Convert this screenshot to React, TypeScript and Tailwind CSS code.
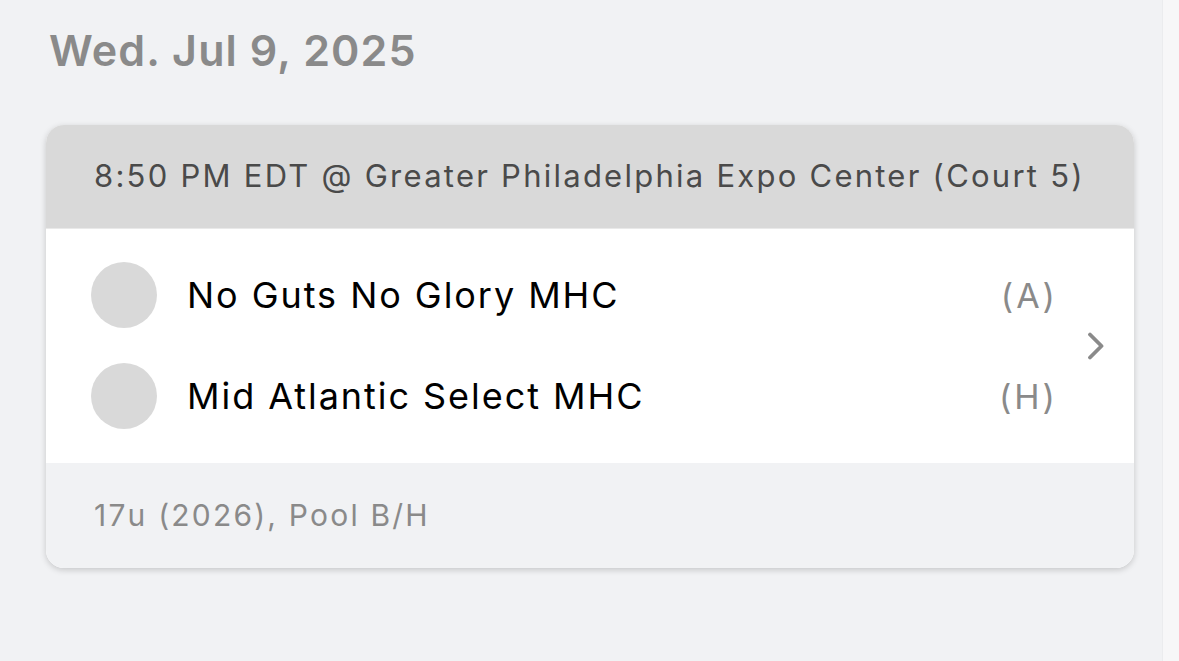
import React from 'react';

const teams = [
  { id: 'a', name: 'No Guts No Glory MHC', side: '(A)' },
  { id: 'h', name: 'Mid Atlantic Select MHC', side: '(H)' },
];

export default function App() {
  return (
    <div className="flex h-[661px] w-[1179px] overflow-hidden bg-[#f1f2f4] font-['Inter',sans-serif]">
      <main className="flex-1 pl-[46px] pr-[28px] pt-[23px]">
        {/* date heading */}
        <h1 className="pl-[3px] text-[43px] font-semibold leading-[54px] tracking-[1.1px] text-[#8a8a8a]">
          Wed. Jul 9, 2025
        </h1>

        {/* game card */}
        <section className="mt-[48px] overflow-hidden rounded-[18px] bg-white shadow-[0_2px_6px_rgba(0,0,0,0.18)]">
          <header className="flex h-[104px] items-center whitespace-nowrap border-b border-[#e9e9e9] bg-[#d9d9d9] pl-[48px] text-[31px] tracking-[2.25px] text-[#4a4a4a]">
            8:50 PM EDT @ Greater Philadelphia Expo Center (Court 5)
          </header>

          <div className="flex items-center pb-[34px] pt-[33px]">
            <div className="flex flex-1 flex-col gap-[35px] pl-[45px]">
              {teams.map(team => (
                <div key={team.id} className="flex h-[66px] items-center">
                  <div className="h-[66px] w-[66px] shrink-0 rounded-full bg-[#d9d9d9]" />
                  <span className="ml-[30px] flex-1 whitespace-nowrap text-[36px] tracking-[1.95px] text-black">{team.name}</span>
                  <span className="text-[34px] tracking-[3px] text-[#8a8a8a]">{team.side}</span>
                </div>
              ))}
            </div>
            <div className="flex w-[76px] pl-[28px]">
              <svg width="20" height="28" viewBox="0 0 20 28" fill="none">
                <path d="M4 2.5l11.5 11.5-11.5 11.5" stroke="#8a8a8a" strokeWidth="3.8" strokeLinecap="round" strokeLinejoin="round" />
              </svg>
            </div>
          </div>

          <footer className="flex h-[105px] items-center whitespace-nowrap bg-[#f1f2f4] pl-[48px] text-[30px] tracking-[2.2px] text-[#8a8a8a]">
            17u (2026), Pool B/H
          </footer>
        </section>
      </main>

      {/* scroll track */}
      <div className="w-[17px] border-l border-[#ebecee] bg-[#f7f7f8]" />
    </div>
  );
}
